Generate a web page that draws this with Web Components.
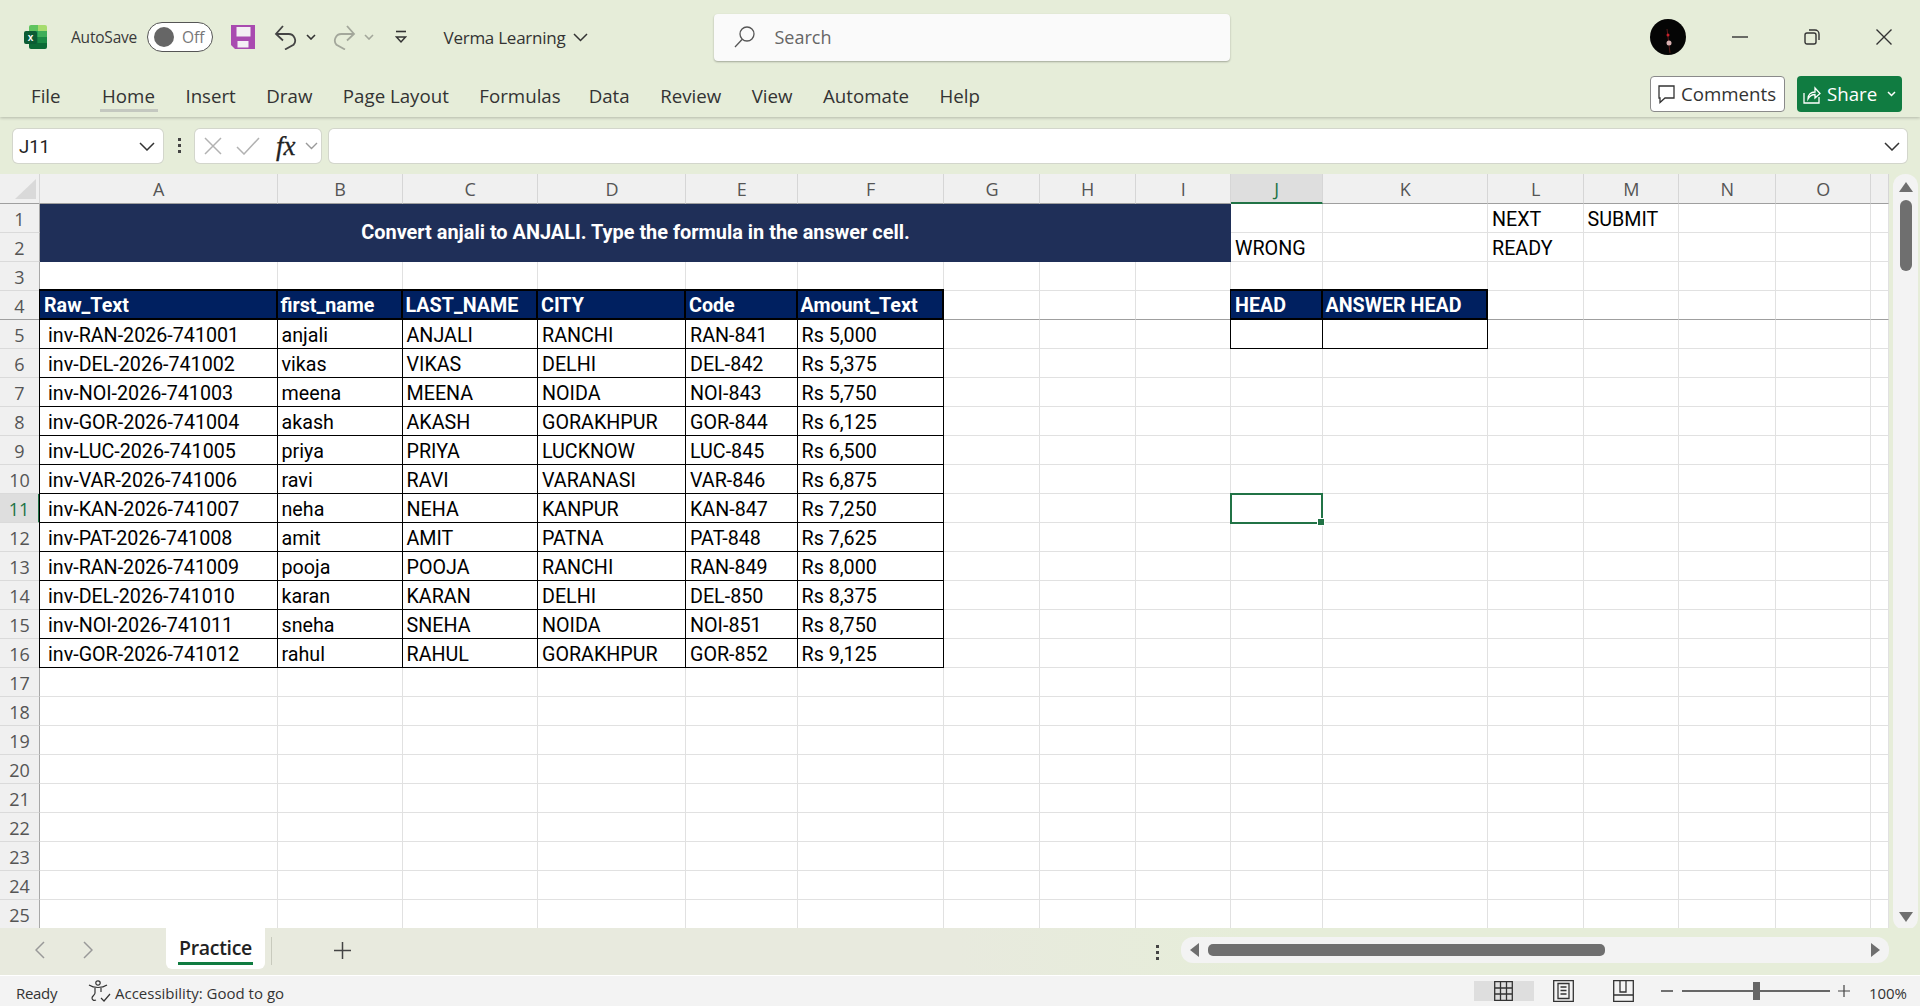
<!DOCTYPE html>
<html>
<head>
<meta charset="utf-8">
<title>Practice - Excel</title>
<style>
  html, body { margin: 0; height: 100%; overflow: hidden; background: #e6edd9; }
  body { display: flex; flex-direction: column; height: 1006px; font-family: "Open Sans", "Liberation Sans", sans-serif; }
</style>
</head>
<body>
<excel-ribbon></excel-ribbon>
<formula-bar cell="J11"></formula-bar>
<excel-sheet></excel-sheet>
<sheet-tabs active="Practice"></sheet-tabs>
<status-bar></status-bar>

<script>
const UI_FONT = '"Open Sans", "Liberation Sans", sans-serif';

class excelRibbon extends HTMLElement {
  constructor() {
    super();
    this.attachShadow({ mode: 'open' });
    this.render();
  }

  render() {
    const tabs = ['File', 'Home', 'Insert', 'Draw', 'Page Layout', 'Formulas', 'Data', 'Review', 'View', 'Automate', 'Help'];
    this.shadowRoot.innerHTML = `
      <style>
        :host {
          display: block;
          height: 117px;
          box-sizing: border-box;
          background: #e6edd9;
          box-shadow: 0 1px 3px rgba(0,0,0,.22);
          position: relative;
          font-family: ${UI_FONT};
          color: #333;
        }
        .top { display: flex; align-items: center; height: 74px; }
        .top > * { flex: none; }
        svg { display: block; }
        .auto { font-size: 15.5px; color: #3a3a3a; margin-left: 24px; width: 67px; white-space: nowrap; letter-spacing: -.2px; }
        .toggle {
          margin-left: 9px; width: 66px; height: 30px; box-sizing: border-box;
          border: 1px solid #555; border-radius: 15px; background: #fff;
          display: flex; align-items: center; padding-left: 6px; gap: 8px;
          font-size: 15.5px; color: #777;
        }
        .toggle i { width: 20px; height: 20px; border-radius: 50%; background: #666; flex: none; }
        .book { font-size: 17px; color: #333; margin-left: 36.500px; width: 126px; white-space: nowrap; letter-spacing: -.25px; }
        .search {
          margin-left: 126px; width: 516px; height: 47px; box-sizing: border-box;
          background: #fafafa; border-radius: 4px; box-shadow: 0 1px 2px rgba(0,0,0,.3);
          display: flex; align-items: center; padding-left: 20px; gap: 20px;
          font-size: 18px; color: #666;
        }
        .right { margin-left: auto; display: flex; align-items: center; padding-right: 28px; }
        .avatar { width: 36px; height: 36px; border-radius: 50%; background: #050505; margin-right: 46px; }
        .tabs { display: flex; height: 43px; align-items: flex-start; padding-left: 31px; gap: 30.500px; font-size: 18.7px; position: relative; }
        .tabs span { display: block; position: relative; line-height: 44px; white-space: nowrap; }
        .tabs span:first-child { margin-right: 11px; }
        .tabs span:nth-child(6) { margin-right: -2.500px; }
        .tabs span.on::after { content: ""; position: absolute; left: -2px; right: -3px; top: 35px; height: 3px; background: #c4c8c0; }
        .actions { position: absolute; right: 18px; top: 2px; display: flex; gap: 12px; }
        .btn {
          height: 36px; box-sizing: border-box; border-radius: 4px;
          display: flex; align-items: center; font-size: 18.7px;
        }
        .comments { width: 135px; background: #fff; border: 1px solid #8a8a8a; padding-left: 7px; gap: 6px; }
        .share { width: 105px; background: #107c41; color: #fff; padding-left: 6px; gap: 6px; }
      </style>
      <div class="top">
        <svg style="margin-left:24px" width="23" height="24" viewBox="0 0 23 24">
          <path d="M7 0h7v6H5V2a2 2 0 0 1 2-2z" fill="#5fc45f"/>
          <path d="M14 0h7a2 2 0 0 1 2 2v4h-9z" fill="#a6dc6e"/>
          <path d="M5 6h9v6H5z" fill="#1f9c55"/>
          <path d="M14 6h9v6h-9z" fill="#3fae5a"/>
          <path d="M5 12h9v6H5z" fill="#107c41"/>
          <path d="M14 12h9v6h-9z" fill="#1b8a45"/>
          <path d="M5 18h18v4a2 2 0 0 1-2 2H7a2 2 0 0 1-2-2z" fill="#0c6a36"/>
          <rect x="0" y="6" width="13" height="13" rx="2" fill="#0b5c34"/>
          <text x="6.5" y="16" font-size="10" font-weight="700" fill="#fff" text-anchor="middle" font-family="Liberation Sans">x</text>
        </svg>
        <span class="auto">AutoSave</span>
        <span class="toggle"><i></i>Off</span>
        <svg style="margin-left:18px" width="24" height="24" viewBox="0 0 24 24">
          <path d="M0 0h24v24H4l-4-4z" fill="#a94ab0"/>
          <rect x="5.5" y="2" width="14" height="9.5" fill="#f4eef4"/>
          <rect x="6.5" y="16" width="11" height="6.5" fill="#f4eef4"/>
        </svg>
        <svg style="margin-left:19px" width="24" height="25" viewBox="0 0 24 25" fill="none" stroke="#444" stroke-width="1.800">
          <path d="M2 9h12.500a6.500 6.500 0 0 1 5 10.800L11 24.500"/><path d="M9 1 2 9l7 6.500"/>
        </svg>
        <svg style="margin-left:8px" width="10" height="6" viewBox="0 0 10 6" fill="none" stroke="#333" stroke-width="1.600"><path d="M1 1l4 4 4-4"/></svg>
        <svg style="margin-left:16px" width="24" height="25" viewBox="0 0 24 25" fill="none" stroke="#a3a79b" stroke-width="1.800">
          <path d="M22 9H9.500a6.500 6.500 0 0 0-5 10.800L13 24.500"/><path d="M15 1l7 8-7 6.500"/>
        </svg>
        <svg style="margin-left:8px" width="10" height="6" viewBox="0 0 10 6" fill="none" stroke="#a3a79b" stroke-width="1.600"><path d="M1 1l4 4 4-4"/></svg>
        <svg style="margin-left:21px" width="12" height="14" viewBox="0 0 12 14" fill="none" stroke="#333" stroke-width="1.600"><path d="M1 1.500h10"/><path d="M1.500 7l4.500 5 4.500-5z" stroke-width="1.500"/></svg>
        <span class="book">Verma Learning</span>
        <svg style="margin-left:3px" width="15" height="9" viewBox="0 0 15 9" fill="none" stroke="#333" stroke-width="1.500"><path d="M1 1l6.500 6.500L14 1"/></svg>
        <div class="search">
          <svg width="21" height="22" viewBox="0 0 21 22" fill="none" stroke="#555" stroke-width="1.300"><circle cx="13" cy="8" r="7"/><path d="M8 13.500 1 21"/></svg>
          <span>Search</span>
        </div>
        <div class="right">
          <div class="avatar">
            <svg width="36" height="36" viewBox="0 0 36 36" fill="none"><path d="M17 10l3 24" stroke="#5a1a1a"/><circle cx="18" cy="16" r="1.500" fill="#c8202a"/><circle cx="19" cy="24" r="2.500" fill="#d8b0b0"/></svg>
          </div>
          <svg width="16" height="16" viewBox="0 0 16 16" stroke="#333" stroke-width="1.400"><path d="M0 8h16"/></svg>
          <svg style="margin-left:56px" width="16" height="16" viewBox="0 0 16 16" fill="none" stroke="#333" stroke-width="1.400"><rect x="1" y="4" width="11" height="11" rx="2"/><path d="M5 1h6a4 4 0 0 1 4 4v6"/></svg>
          <svg style="margin-left:56px" width="16" height="16" viewBox="0 0 16 16" stroke="#333" stroke-width="1.400"><path d="M0.500 0.500l15 15M15.500 0.500l-15 15"/></svg>
        </div>
      </div>
      <div class="tabs">
        ${tabs.map(t => `<span class="${t === 'Home' ? 'on' : ''}">${t}</span>`).join('')}
        <div class="actions">
          <div class="btn comments">
            <svg width="17" height="19" viewBox="0 0 17 19" fill="none" stroke="#333" stroke-width="1.300"><path d="M1 1h15v12H7l-5 4.500V13H1z"/></svg>
            <span>Comments</span>
          </div>
          <div class="btn share">
            <svg width="18" height="20" viewBox="0 0 18 20" fill="none" stroke="#fff" stroke-width="1.300"><path d="M1 9v10h15v-6"/><path d="M5 15c0-5 3-7 7-7V4l5 5.500-5 4.500v-3.500c-3 0-5 1-7 4.500z"/></svg>
            <span>Share</span>
            <svg style="margin-left:4px" width="9" height="6" viewBox="0 0 9 6" fill="none" stroke="#fff" stroke-width="1.500"><path d="M1 1l3.500 3.500L8 1"/></svg>
          </div>
        </div>
      </div>
    `;
  }
}
customElements.define('excel-ribbon', excelRibbon);

class formulaBar extends HTMLElement {
  constructor() {
    super();
    this.attachShadow({ mode: 'open' });
    this.render();
  }

  render() {
    this.shadowRoot.innerHTML = `
      <style>
        :host {
          display: flex;
          height: 57px;
          box-sizing: border-box;
          padding: 12px 13px 0 13px;
          align-items: flex-start;
          font-family: ${UI_FONT};
        }
        .box { height: 34px; box-sizing: border-box; background: #fff; border-radius: 5px; box-shadow: 0 0 0 1px #d3d6cc; display: flex; align-items: center; }
        .name { width: 150px; padding: 0 8px 0 6px; justify-content: space-between; font: 18.5px Roboto, sans-serif; color: #222; }
        .name span { padding-top: 2px; }
        .dots { width: 32px; display: flex; flex-direction: column; align-items: center; gap: 3px; padding-top: 9px; flex: none; }
        .dots i { width: 3px; height: 3px; background: #444; }
        .fx { width: 126px; padding-left: 9px; gap: 14px; }
        .fx b { font: italic 400 27px "Liberation Serif", serif; color: #222; width: 22px; margin-left: 2px; -webkit-text-stroke: .3px #222; }
        .input { flex: 1; margin-left: 8px; justify-content: flex-end; padding-right: 7px; }
      </style>
      <div class="box name"><span>${this.getAttribute('cell')}</span>
        <svg width="16" height="9" viewBox="0 0 16 9" fill="none" stroke="#333" stroke-width="1.500"><path d="M1 1l7 7 7-7"/></svg>
      </div>
      <div class="dots"><i></i><i></i><i></i></div>
      <div class="box fx">
        <svg width="18" height="18" viewBox="0 0 18 18" stroke="#b2b2b2" stroke-width="1.500"><path d="M1 1l16 16M17 1L1 17"/></svg>
        <svg width="24" height="18" viewBox="0 0 24 18" fill="none" stroke="#b2b2b2" stroke-width="1.500"><path d="M1 10l7 7L23 1"/></svg>
        <b>fx</b>
        <svg style="margin-left:-7px" width="13" height="8" viewBox="0 0 13 8" fill="none" stroke="#999" stroke-width="1.400"><path d="M1 1l5.500 5.500L12 1"/></svg>
      </div>
      <div class="box input">
        <svg width="16" height="9" viewBox="0 0 16 9" fill="none" stroke="#333" stroke-width="1.500"><path d="M1 1l7 7 7-7"/></svg>
      </div>
    `;
  }
}
customElements.define('formula-bar', formulaBar);

class excelSheet extends HTMLElement {
  constructor() {
    super();
    this.attachShadow({ mode: 'open' });
    this.render();
  }

  render() {
    const cols = ['A','B','C','D','E','F','G','H','I','J','K','L','M','N','O',''];
    const widths = [40,237.5,125,135.5,148,111.5,146.5,96,95.5,95.5,91.5,165.5,95.5,95.5,96.5,95.5,18];
    const heads = ['Raw_Text','first_name','LAST_NAME','CITY','Code','Amount_Text'];
    const data = [
      ['inv-RAN-2026-741001','anjali','ANJALI','RANCHI','RAN-841','Rs 5,000'],
      ['inv-DEL-2026-741002','vikas','VIKAS','DELHI','DEL-842','Rs 5,375'],
      ['inv-NOI-2026-741003','meena','MEENA','NOIDA','NOI-843','Rs 5,750'],
      ['inv-GOR-2026-741004','akash','AKASH','GORAKHPUR','GOR-844','Rs 6,125'],
      ['inv-LUC-2026-741005','priya','PRIYA','LUCKNOW','LUC-845','Rs 6,500'],
      ['inv-VAR-2026-741006','ravi','RAVI','VARANASI','VAR-846','Rs 6,875'],
      ['inv-KAN-2026-741007','neha','NEHA','KANPUR','KAN-847','Rs 7,250'],
      ['inv-PAT-2026-741008','amit','AMIT','PATNA','PAT-848','Rs 7,625'],
      ['inv-RAN-2026-741009','pooja','POOJA','RANCHI','RAN-849','Rs 8,000'],
      ['inv-DEL-2026-741010','karan','KARAN','DELHI','DEL-850','Rs 8,375'],
      ['inv-NOI-2026-741011','sneha','SNEHA','NOIDA','NOI-851','Rs 8,750'],
      ['inv-GOR-2026-741012','rahul','RAHUL','GORAKHPUR','GOR-852','Rs 9,125'],
    ];

    // contenido y clase de cada celda, clave "fila,columna" (columna 1 = A)
    const cells = {};
    heads.forEach((h, i) => { cells['4,' + (i + 1)] = { t: h, c: 'th' + (i === 0 ? ' first' : '') }; });
    data.forEach((row, r) => row.forEach((v, i) => {
      cells[(r + 5) + ',' + (i + 1)] = { t: v, c: 'td' + (i === 0 ? ' first ind' : '') };
    }));
    cells['4,10'] = { t: 'HEAD', c: 'th first' };
    cells['4,11'] = { t: 'ANSWER HEAD', c: 'th' };
    cells['5,10'] = { t: '', c: 'td first' };
    cells['5,11'] = { t: '', c: 'td' };
    cells['2,10'] = { t: 'WRONG', c: '' };
    cells['1,12'] = { t: 'NEXT', c: '' };
    cells['2,12'] = { t: 'READY', c: '' };
    cells['1,13'] = { t: 'SUBMIT', c: '' };

    let html = '<div class="corner"><svg width="21" height="20" viewBox="0 0 21 20"><path d="M21 0v20H0z" fill="#d9d9d9"/></svg></div>';
    cols.forEach((c, i) => {
      html += `<div class="ch${c === 'J' ? ' sel' : ''}" style="grid-row:1;grid-column:${i + 2}">${c}</div>`;
    });
    for (let r = 1; r <= 25; r++) {
      html += `<div class="rh${r === 11 ? ' sel' : ''}${r === 4 ? ' frz' : ''}" style="grid-row:${r + 1};grid-column:1">${r}</div>`;
      for (let c = 1; c <= 16; c++) {
        if (r <= 2 && c <= 9) continue;
        const cell = cells[r + ',' + c] || { t: '', c: '' };
        html += `<div class="cell ${cell.c}${r === 4 ? ' frz' : ''}" style="grid-row:${r + 1};grid-column:${c + 1}">${cell.t}</div>`;
      }
    }
    html += '<div class="banner">Convert anjali to ANJALI. Type the formula in the answer cell.</div>';
    html += '<div class="cursor"></div>';

    this.shadowRoot.innerHTML = `
      <style>
        :host { display: flex; height: 754px; overflow: hidden; font-family: Roboto, "Liberation Sans", sans-serif; }
        .grid {
          display: grid;
          grid-template-columns: ${widths.map(w => w + 'px').join(' ')};
          grid-template-rows: 29.500px repeat(25, 29px);
          background: #fff;
          flex: none;
          position: relative;
        }
        .corner { grid-row: 1; grid-column: 1; background: #f0f0f0; border-bottom: 1px solid #9f9f9f; border-right: 1px solid #d6d6d6; box-sizing: border-box; padding: 5px 0 0 15px; }
        .corner svg { display: block; }
        .ch, .rh {
          background: #f0f0f0; color: #555; font: 18px "Open Sans", sans-serif;
          display: flex; align-items: center; justify-content: center; box-sizing: border-box;
        }
        .ch { border-right: 1px solid #d6d6d6; border-bottom: 1px solid #9f9f9f; padding: 2px 0 0 1px; }
        .rh { border-right: 1px solid #a8a8a8; border-bottom: 1px solid #dadada; padding-top: 2px; }
        .ch.sel { background: #dedede; color: #217346; border-bottom: 2px solid #217346; }
        .rh.sel { background: #dedede; color: #217346; border-right: 2px solid #217346; }
        .cell {
          box-sizing: border-box; border-right: 1px solid #e1e1e1; border-bottom: 1px solid #e1e1e1;
          font-size: 19.7px; color: #000; white-space: nowrap; overflow: visible;
          display: flex; align-items: center; padding: 3px 0 0 4px;
        }
        .frz { border-bottom-color: #9f9f9f; }
        .td { border-right-color: #000; border-bottom-color: #000; }
        .td.first { box-shadow: -1px 0 0 #000; }
        .td.ind { padding-left: 8px; }
        .th {
          background: #002060; color: #fff; font-weight: 700; padding-left: 3px;
          border-right: 2px solid #000; border-bottom: 2px solid #000; box-shadow: 0 -2px 0 #000;
        }
        .th.first { box-shadow: 0 -2px 0 #000, -1px -2px 0 #000, -1px 0 0 #000; padding-left: 4px; }
        .banner {
          grid-row: 2 / span 2; grid-column: 2 / span 9;
          background: #1f2f58; color: #fff; font-weight: 700; font-size: 19.9px;
          display: flex; align-items: center; justify-content: center;
        }
        .cursor {
          grid-row: 12; grid-column: 11; box-sizing: border-box; margin: -1px 0 -1px -1px;
          border: 2px solid #217346; position: relative; z-index: 2;
        }
        .cursor::after {
          content: ""; position: absolute; right: -4px; bottom: -4px; width: 6px; height: 6px;
          background: #217346; border: 1px solid #fff;
        }
        .vbar { width: 25px; margin: 0 0 0 4px; height: 756px; flex: none; background: #f3f3f3; border-radius: 12px; position: relative; display: flex; flex-direction: column; align-items: center; }
        .vbar svg { display: block; flex: none; }
        .vbar i { display: block; width: 12px; height: 71px; border-radius: 6px; background: #6f6f6f; margin-top: 8px; flex: none; }
        .vbar .down { margin-top: auto; margin-bottom: 8px; }
      </style>
      <div class="grid">${html}</div>
      <div class="vbar">
        <svg style="margin-top:8px" width="14" height="10" viewBox="0 0 14 10"><path d="M7 0l7 10H0z" fill="#6f6f6f"/></svg>
        <i></i>
        <svg class="down" width="14" height="10" viewBox="0 0 14 10"><path d="M0 0h14L7 10z" fill="#6f6f6f"/></svg>
      </div>
    `;
  }
}
customElements.define('excel-sheet', excelSheet);

class sheetTabs extends HTMLElement {
  constructor() {
    super();
    this.attachShadow({ mode: 'open' });
    this.render();
  }

  render() {
    this.shadowRoot.innerHTML = `
      <style>
        :host {
          display: flex; height: 47px; box-sizing: border-box; align-items: flex-start;
          background: linear-gradient(90deg, #e8eade 0, #e8eade 50%, #e6edd9 65%);
          font-family: ${UI_FONT}; position: relative; z-index: 1;
        }
        svg { display: block; flex: none; }
        .tab {
          width: 99px; height: 41px; box-sizing: border-box; flex: none;
          background: #fff; border-radius: 0 0 6px 6px; display: flex; flex-direction: column; align-items: center;
          padding-top: 6px; font-size: 19.5px; font-weight: 600; color: #222; letter-spacing: -.3px;
        }
        .tab span { line-height: 28px; border-bottom: 3px solid #107c41; width: 75px; text-align: center; white-space: nowrap; }
        .div { width: 1px; height: 28px; background: #c8cabd; margin: 9px 0 0 6px; flex: none; }
        .dots { margin-left: auto; display: flex; flex-direction: column; gap: 3px; padding-top: 17px; margin-right: 22px; flex: none; }
        .dots i { width: 3px; height: 3px; background: #444; display: block; }
        .track {
          width: 708px; height: 26px; margin: 9px 31px 0 0; background: #f3f3f3; border-radius: 12px; flex: none;
          display: flex; align-items: center; padding: 0 9px; box-sizing: border-box;
        }
        .thumb { width: 397px; height: 12px; border-radius: 5px; background: #6f6f6f; margin-left: 9px; flex: none; }
      </style>
      <svg style="margin:13px 0 0 35px" width="10" height="18" viewBox="0 0 10 18" fill="none" stroke="#999" stroke-width="1.500"><path d="M9 1 1 9l8 8"/></svg>
      <svg style="margin:13px 0 0 38px" width="10" height="18" viewBox="0 0 10 18" fill="none" stroke="#999" stroke-width="1.500"><path d="M1 1l8 8-8 8"/></svg>
      <div class="tab" style="margin-left:73px"><span>${this.getAttribute('active')}</span></div>
      <div class="div"></div>
      <svg style="margin:14px 0 0 62px" width="17" height="17" viewBox="0 0 17 17" stroke="#444" stroke-width="1.500"><path d="M8.500 0v17M0 8.500h17"/></svg>
      <div class="dots"><i></i><i></i><i></i></div>
      <div class="track">
        <svg width="9" height="14" viewBox="0 0 9 14"><path d="M9 0v14L0 7z" fill="#6f6f6f"/></svg>
        <div class="thumb"></div>
        <svg style="margin-left:auto" width="9" height="14" viewBox="0 0 9 14"><path d="M0 0v14l9-7z" fill="#6f6f6f"/></svg>
      </div>
    `;
  }
}
customElements.define('sheet-tabs', sheetTabs);

class statusBar extends HTMLElement {
  constructor() {
    super();
    this.attachShadow({ mode: 'open' });
    this.render();
  }

  render() {
    this.shadowRoot.innerHTML = `
      <style>
        :host {
          display: flex; height: 31px; box-sizing: border-box; align-items: center;
          background: #f3f3f3; border-top: 1px solid #fff;
          font-family: ${UI_FONT}; font-size: 15px; color: #333;
        }
        svg { display: block; flex: none; }
        .txt { padding-top: 3px; white-space: nowrap; }
        .ready { margin-left: 16px; width: 72px; letter-spacing: -.3px; }
        .views { margin-left: auto; display: flex; align-items: center; align-self: stretch; }
        .view { width: 60px; display: flex; align-items: center; justify-content: center; flex: none; }
        .view.on { background: #dedede; }
        .slider { width: 148px; height: 2px; background: #666; position: relative; margin: 0 8px 0 9px; flex: none; }
        .slider i { position: absolute; left: 71px; top: -8px; width: 7px; height: 18px; background: #666; }
        .zoom { margin: 0 12px 0 19.500px; width: 39px; letter-spacing: -.1px; }
      </style>
      <span class="txt ready">Ready</span>
      <svg width="23" height="22" viewBox="0 0 23 22" fill="none" stroke="#333" stroke-width="1.200">
        <circle cx="10" cy="3" r="2.200"/><path d="M1 5c3 2 4 2.500 9 2.500S16 7 19 5"/><path d="M7 8v5c0 2-3 3-3 5 0 2 2 3 4 2"/><path d="M13 8v4"/><path d="M13 18l3 3 6-7"/>
      </svg>
      <span class="txt" style="margin-left:4px">Accessibility: Good to go</span>
      <div class="views">
        <div class="view on">
          <svg width="19" height="20" viewBox="0 0 19 20" fill="none" stroke="#333" stroke-width="1.300"><path d="M.7.700h17.600v18.600H.7zM6.500.7v18.600M12.500.7v18.600M.7 7h17.600M.7 13h17.600"/></svg>
        </div>
        <div class="view">
          <svg width="21" height="22" viewBox="0 0 21 22" fill="none" stroke="#333" stroke-width="1.300"><path d="M.7.700h19.600v20.600H.7z"/><path d="M5 3.500h11v15H5zM7.500 7h6M7.500 10.500h6M7.500 14h6"/></svg>
        </div>
        <div class="view">
          <svg width="21" height="22" viewBox="0 0 21 22" fill="none" stroke="#333" stroke-width="1.300"><path d="M.7.700h19.600v20.600H.7zM.7 15h19.600M7 .7V12h6V.7"/></svg>
        </div>
      </div>
      <svg style="margin-left:7px" width="12" height="2" viewBox="0 0 12 2"><path d="M0 1h12" stroke="#444" stroke-width="1.500"/></svg>
      <div class="slider"><i></i></div>
      <svg width="12" height="12" viewBox="0 0 12 12" stroke="#444" stroke-width="1.200"><path d="M6 0v12M0 6h12"/></svg>
      <span class="txt zoom">100%</span>
    `;
  }
}
customElements.define('status-bar', statusBar);
</script>
</body>
</html>
